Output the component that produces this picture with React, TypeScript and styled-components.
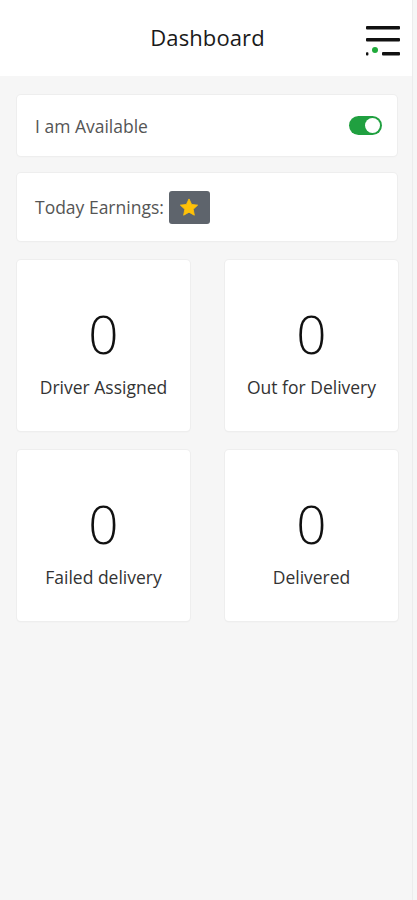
import React from "react";
import styled, { createGlobalStyle } from "styled-components";

const Global = createGlobalStyle`
  html, body { margin: 0; padding: 0; background: #f6f6f6; }
  body { font-family: "Open Sans", "Noto Sans", sans-serif; }
  * { box-sizing: border-box; }
`;

const Page = styled.div`
  min-height: 900px;
  background: #f6f6f6;
  border-right: 1px solid #ececec;
  width: 413px;
`;

const Header = styled.header`
  height: 76px;
  background: #ffffff;
  display: grid;
  grid-template-columns: 1fr auto 1fr;
  align-items: center;
`;

const Title = styled.h1`
  grid-column: 2;
  margin: 0 0 2px 3px;
  font-size: 22px;
  font-weight: 400;
  color: #1a1a1a;
  letter-spacing: 0.1px;
`;

const MenuButton = styled.button`
  grid-column: 3;
  justify-self: end;
  margin-right: 11px;
  margin-top: 4px;
  border: 0;
  background: none;
  padding: 0;
  width: 36px;
  height: 34px;
  display: flex;
  align-items: center;
  justify-content: center;
`;

const Content = styled.main`
  padding: 19px 15px 0 17px;
  display: flex;
  flex-direction: column;
`;

const Card = styled.section<{ $h: number; $mb: number }>`
  background: #fff;
  border-radius: 4px;
  box-shadow: 0 0 0 1px #eeeeee, 0 1px 2px rgba(0, 0, 0, 0.04);
  height: ${(p) => p.$h}px;
  margin-bottom: ${(p) => p.$mb}px;
  display: flex;
  align-items: center;
  padding: 0 15px 0 18px;
`;

const RowText = styled.span`
  font-size: 17.5px;
  color: #555;
  flex: 1;
`;

const EarnText = styled.span`
  font-size: 17.5px;
  color: #555;
  margin-right: 5px;
`;

const Toggle = styled.div`
  width: 33px;
  height: 19px;
  border-radius: 10px;
  background: #20a040;
  display: flex;
  align-items: center;
  justify-content: flex-end;
  padding: 2px;
`;

const Knob = styled.div`
  width: 15px;
  height: 15px;
  border-radius: 50%;
  background: #fff;
`;

const Badge = styled.div`
  width: 41px;
  height: 33px;
  border-radius: 3px;
  background: #5e646c;
  display: flex;
  align-items: center;
  justify-content: center;
`;

const Grid = styled.div`
  display: grid;
  grid-template-columns: 173px 173px;
  column-gap: 35px;
  row-gap: 19px;
  margin-top: 2px;
`;

const StatCard = styled.div`
  background: #fff;
  border-radius: 4px;
  box-shadow: 0 0 0 1px #eeeeee, 0 1px 2px rgba(0, 0, 0, 0.05);
  height: 171px;
  display: flex;
  flex-direction: column;
  align-items: center;
  padding-top: 47px;
`;

const StatValue = styled.div`
  font-size: 53px;
  font-weight: 300;
  line-height: 1;
  color: #111;
`;

const StatLabel = styled.div`
  margin-top: 15px;
  font-size: 17.5px;
  color: #333;
`;

const stats = [
  { value: 0, label: "Driver Assigned" },
  { value: 0, label: "Out for Delivery" },
  { value: 0, label: "Failed delivery" },
  { value: 0, label: "Delivered" },
];

export default function App() {
  return (
    <Page>
      <Global />
      <Header>
        <Title>Dashboard</Title>
        <MenuButton aria-label="menu">
          <svg width="36" height="34" viewBox="0 0 36 34">
            <rect x="1" y="3" width="34" height="3.5" rx="1" fill="#111" />
            <rect x="1" y="15" width="34" height="3.5" rx="1" fill="#111" />
            <rect x="17" y="29" width="18" height="3.5" rx="1" fill="#111" />
            <rect x="1" y="29.3" width="2.4" height="3.2" rx="0.8" fill="#111" />
            <circle cx="10" cy="27" r="3" fill="#1faa3a" />
          </svg>
        </MenuButton>
      </Header>
      <Content>
        <Card $h={61} $mb={17}>
          <RowText>I am Available</RowText>
          <Toggle>
            <Knob />
          </Toggle>
        </Card>
        <Card $h={68} $mb={17}>
          <EarnText>Today Earnings:</EarnText>
          <Badge>
            <svg width="22" height="21" viewBox="0 0 24 24">
              <path
                d="M12 2.2l2.95 6.3 6.9.8-5.1 4.7 1.35 6.8L12 17.4l-6.1 3.4 1.35-6.8-5.1-4.7 6.9-.8z"
                fill="#ffc107"
                stroke="#ffc107"
                strokeLinejoin="round"
                strokeWidth="1"
              />
            </svg>
          </Badge>
        </Card>
        <Grid>
          {stats.map((s) => (
            <StatCard key={s.label}>
              <StatValue>{s.value}</StatValue>
              <StatLabel>{s.label}</StatLabel>
            </StatCard>
          ))}
        </Grid>
      </Content>
    </Page>
  );
}
